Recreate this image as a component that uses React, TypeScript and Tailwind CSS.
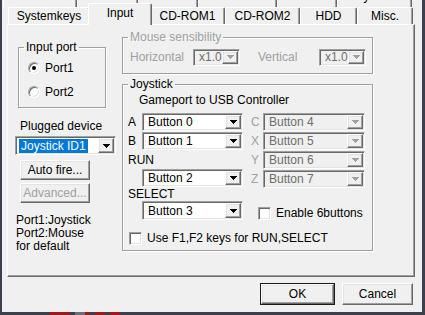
import React from "react";

const sunken =
  "border border-t-[#a0a0a0] border-l-[#a0a0a0] border-b-white border-r-white shadow-[inset_1px_1px_0_#696969,inset_-1px_-1px_0_#e3e3e3]";
const raised =
  "border border-t-white border-l-white border-b-[#696969] border-r-[#696969] shadow-[inset_-1px_-1px_0_#a0a0a0,inset_1px_1px_0_#e3e3e3]";

function Arrow({ disabled }: { disabled?: boolean }) {
  return (
    <svg width="7" height="4" viewBox="0 0 7 4" className="block">
      <path
        d="M0 0h7v1h-1v1h-1v1h-1v1h-1v-1h-1v-1h-1v-1h-1z"
        fill={disabled ? "#a0a0a0" : "#000"}
      />
    </svg>
  );
}

function Combo({
  value,
  w,
  h = "h-[18px]",
  disabled,
  highlight,
}: {
  value: string;
  w: string;
  h?: string;
  disabled?: boolean;
  highlight?: boolean;
}) {
  return (
    <div
      className={`flex ${w} ${h} shrink-0 items-stretch p-[1px] ${sunken} ${
        disabled ? "bg-[#f0f0f0]" : "bg-white"
      }`}
    >
      <div className="flex min-w-0 flex-1 items-center pl-[2px]">
        <span
          className={`px-[2px] leading-[14px] ${
            highlight
              ? "bg-[#0078d7] text-white"
              : disabled
                ? "text-[#6d6d6d]"
                : "text-black"
          }`}
        >
          {value}
        </span>
      </div>
      <div className={`flex w-[16px] items-center justify-center bg-[#f0f0f0] ${raised}`}>
        <Arrow disabled={disabled} />
      </div>
    </div>
  );
}

function Button({
  label,
  w,
  h,
  disabled,
  def,
}: {
  label: string;
  w: string;
  h: string;
  disabled?: boolean;
  def?: boolean;
}) {
  const inner = (
    <div
      className={`flex h-full w-full items-center justify-center bg-[#f0f0f0] ${raised} ${
        disabled ? "text-[#a0a0a0]" : "text-black"
      }`}
    >
      {label}
    </div>
  );
  if (def) {
    return <div className={`${w} ${h} shrink-0 border border-[#1a1a1a]`}>{inner}</div>;
  }
  return <div className={`${w} ${h} shrink-0`}>{inner}</div>;
}

function Radio({ checked, label }: { checked?: boolean; label: string }) {
  return (
    <div className="flex h-[14px] items-center gap-[5px]">
      <div
        className={`flex h-[12px] w-[12px] items-center justify-center rounded-full bg-white ${sunken}`}
      >
        {checked && <div className="h-[4px] w-[4px] rounded-full bg-black" />}
      </div>
      <span>{label}</span>
    </div>
  );
}

function Check({ label }: { label: string }) {
  return (
    <div className="flex h-[14px] items-center gap-[5px]">
      <div className={`h-[13px] w-[13px] shrink-0 bg-white ${sunken}`} />
      <span>{label}</span>
    </div>
  );
}

function Group({
  title,
  disabled,
  className,
  children,
}: {
  title: string;
  disabled?: boolean;
  className?: string;
  children: React.ReactNode;
}) {
  return (
    <fieldset
      className={`border border-[#a0a0a0] shadow-[inset_1px_1px_0_#fff,1px_1px_0_#fff] ${className ?? ""}`}
    >
      <legend
        className={`ml-[5px] px-[2px] leading-[14px] ${disabled ? "text-[#a0a0a0]" : "text-black"}`}
      >
        {title}
      </legend>
      {children}
    </fieldset>
  );
}

const topTabs = [
  { label: "General", w: "w-[74px]" },
  { label: "CPU", w: "w-[61px]" },
  { label: "Video", w: "w-[60px]" },
  { label: "Resolution", w: "w-[79px]" },
  { label: "Sound", w: "w-[60px]" },
  { label: "Keyboard", w: "w-[75px]" },
];

const tabs = [
  { label: "Systemkeys", w: "w-[82px]" },
  { label: "Input", w: "w-[60px]", selected: true },
  { label: "CD-ROM1", w: "w-[75px]" },
  { label: "CD-ROM2", w: "w-[75px]" },
  { label: "HDD", w: "w-[57px]" },
  { label: "Misc.", w: "w-[56px]" },
];

export default function App() {
  return (
    <div className="h-[315px] w-[425px] overflow-hidden bg-[#3b404c] font-['Liberation_Sans',Arial,sans-serif] text-[12px] text-black">
      <div className="flex h-[312px] w-[422px] flex-col overflow-hidden border-l-2 border-[#3b404c] bg-[#f0f0f0]">
        {/* upper tab row, mostly out of view */}
        <div className="-mt-[12px] flex h-[19px] pl-[1px]">
          {topTabs.map((t) => (
            <div
              key={t.label}
              className={`${t.w} flex shrink-0 items-center justify-center border-l border-r border-l-white border-r-[#696969] pb-[3px] shadow-[inset_-1px_0_0_#a0a0a0]`}
            >
              {t.label}
            </div>
          ))}
        </div>

        {/* lower tab row */}
        <div className="flex h-[17px] items-end pl-[6px]">
          {tabs.map((t) =>
            t.selected ? (
              <div
                key={t.label}
                className="relative z-10 -mx-[2px] -mb-[1px] flex h-[22px] w-[64px] shrink-0 items-start justify-center rounded-t-[2px] border-l border-r border-t border-l-white border-r-[#696969] border-t-white bg-[#f0f0f0] shadow-[inset_-1px_0_0_#a0a0a0]"
              >
                {t.label}
              </div>
            ) : (
              <div
                key={t.label}
                className={`${t.w} flex h-[17px] shrink-0 items-center justify-center rounded-t-[2px] border-l border-r border-t border-l-white border-r-[#696969] border-t-white shadow-[inset_-1px_0_0_#a0a0a0]`}
              >
                {t.label}
              </div>
            ),
          )}
        </div>

        {/* tab page */}
        <div className="ml-[5px] flex h-[253px] w-[408px] shrink-0 border border-b-[#696969] border-l-white border-r-[#696969] border-t-white pl-[7px] shadow-[inset_-1px_-1px_0_#a0a0a0]">
          {/* left column */}
          <div className="flex w-[101px] shrink-0 flex-col">
            <Group title="Input port" className="ml-[3px] mt-[15px] w-[88px] pb-[8px]">
              <div className="mt-[7px] flex flex-col gap-[10px] pl-[9px]">
                <Radio checked label="Port1" />
                <Radio label="Port2" />
              </div>
            </Group>
            <div className="mt-[11px] pl-[5px] leading-[14px]">Plugged device</div>
            <div className="mt-[3px]">
              <Combo value="Joystick ID1" w="w-[101px]" h="h-[19px]" highlight />
            </div>
            <div className="ml-[5px] mt-[5px]">
              <Button label="Auto fire..." w="w-[70px]" h="h-[20px]" />
            </div>
            <div className="ml-[5px] mt-[3px]">
              <Button label="Advanced..." w="w-[70px]" h="h-[20px]" disabled />
            </div>
            <div className="ml-[1px] mt-[11px] leading-[13px]">
              <div>Port1:Joystick</div>
              <div>Port2:Mouse</div>
              <div>for default</div>
            </div>
          </div>

          {/* right column */}
          <div className="ml-[6px] flex w-[251px] shrink-0 flex-col">
            <Group title="Mouse sensibility" disabled className="mt-[5px] pb-[7px]">
              <div className="mt-[4px] flex items-center pl-[7px] text-[#a0a0a0]">
                <span className="w-[63px]">Horizontal</span>
                <Combo value="x1.0" w="w-[47px]" h="h-[17px]" disabled />
                <span className="ml-[18px] w-[61px]">Vertical</span>
                <Combo value="x1.0" w="w-[47px]" h="h-[17px]" disabled />
              </div>
            </Group>

            <Group title="Joystick" className="mt-[3px] pb-[5px]">
              <div className="mt-[2px] pl-[16px] leading-[14px]">Gameport to USB Controller</div>
              <div className="mt-[6px] flex pl-[5px]">
                {/* A/B/RUN/SELECT */}
                <div className="flex w-[115px] shrink-0 flex-col">
                  <div className="flex items-center">
                    <span className="w-[14px]">A</span>
                    <Combo value="Button 0" w="w-[101px]" />
                  </div>
                  <div className="mt-[1px] flex items-center">
                    <span className="w-[14px]">B</span>
                    <Combo value="Button 1" w="w-[101px]" />
                  </div>
                  <div className="flex h-[19px] items-center">RUN</div>
                  <div className="pl-[14px]">
                    <Combo value="Button 2" w="w-[101px]" />
                  </div>
                  <div className="flex h-[14px] items-center">SELECT</div>
                  <div className="pl-[14px]">
                    <Combo value="Button 3" w="w-[101px]" h="h-[19px]" />
                  </div>
                </div>
                {/* C/X/Y/Z */}
                <div className="ml-[8px] flex flex-col gap-[1px]">
                  {[
                    ["C", "Button 4"],
                    ["X", "Button 5"],
                    ["Y", "Button 6"],
                    ["Z", "Button 7"],
                  ].map(([k, v]) => (
                    <div key={k} className="flex items-center">
                      <span className="w-[12px] text-[#a0a0a0]">{k}</span>
                      <Combo value={v} w="w-[102px]" disabled />
                    </div>
                  ))}
                  <div className="mt-[17px] pl-[7px]">
                    <Check label="Enable 6buttons" />
                  </div>
                </div>
              </div>
              <div className="mt-[11px] pl-[6px]">
                <Check label="Use F1,F2 keys for RUN,SELECT" />
              </div>
            </Group>
          </div>
        </div>

        {/* dialog buttons */}
        <div className="mt-[6px] flex justify-end gap-[7px] pr-[9px]">
          <Button label="OK" w="w-[75px]" h="h-[22px]" def />
          <Button label="Cancel" w="w-[71px]" h="h-[22px]" />
        </div>
      </div>
      <div className="flex h-[3px] pl-[50px]">
        <div className="w-[20px] bg-[#9c1c1c]" />
        <div className="ml-[5px] w-[10px] bg-[#6d6f78]" />
        <div className="w-[5px] bg-[#9c1c1c]" />
        <div className="ml-[5px] w-[10px] bg-[#9c1c1c]" />
        <div className="ml-[5px] w-[10px] bg-[#9c1c1c]" />
      </div>
    </div>
  );
}
